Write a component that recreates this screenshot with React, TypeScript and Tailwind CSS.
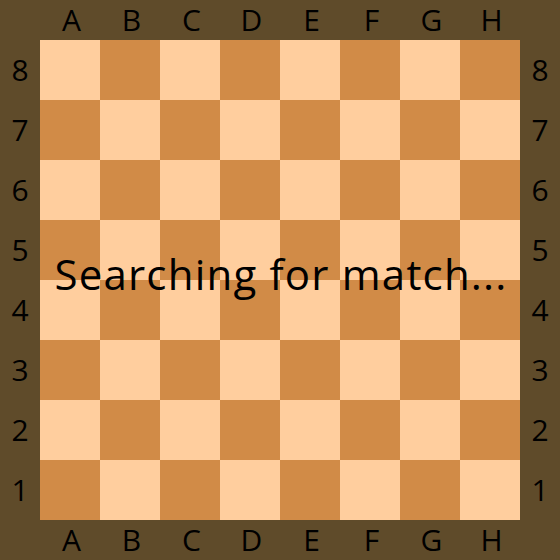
import React from "react";

const files = ["A", "B", "C", "D", "E", "F", "G", "H"];
const ranks = ["8", "7", "6", "5", "4", "3", "2", "1"];

export default function App() {
  const squares = [];
  for (let r = 0; r < 8; r++) {
    for (let c = 0; c < 8; c++) {
      const light = (r + c) % 2 === 0;
      squares.push(
        <div key={`${r}-${c}`} className={light ? "bg-[#ffce9e]" : "bg-[#d18b47]"} />
      );
    }
  }
  return (
    <div
      className="w-[560px] h-[560px] bg-[#5f4b2a] grid grid-cols-[40px_480px_40px] grid-rows-[40px_480px_40px] text-black"
      style={{ fontFamily: '"Open Sans", "Noto Sans", sans-serif' }}
    >
      <div />
      <div className="grid grid-cols-8 items-center text-[30px] leading-none">
        {files.map((f) => (
          <div key={f} className="text-center pl-[3px]">{f}</div>
        ))}
      </div>
      <div />
      <div className="grid grid-rows-8 items-center text-[30px] leading-none">
        {ranks.map((r) => (
          <div key={r} className="text-center">{r}</div>
        ))}
      </div>
      <div className="relative">
        <div className="grid grid-cols-8 grid-rows-8 w-[480px] h-[480px]">{squares}</div>
        <div className="absolute inset-0 flex items-center justify-center pb-[12px] pl-[2px]">
          <span className="text-[42px] leading-none whitespace-nowrap tracking-[1.2px]">Searching for match...</span>
        </div>
      </div>
      <div className="grid grid-rows-8 items-center text-[30px] leading-none">
        {ranks.map((r) => (
          <div key={r} className="text-center">{r}</div>
        ))}
      </div>
      <div />
      <div className="grid grid-cols-8 items-center text-[30px] leading-none">
        {files.map((f) => (
          <div key={f} className="text-center pl-[3px]">{f}</div>
        ))}
      </div>
      <div />
    </div>
  );
}
